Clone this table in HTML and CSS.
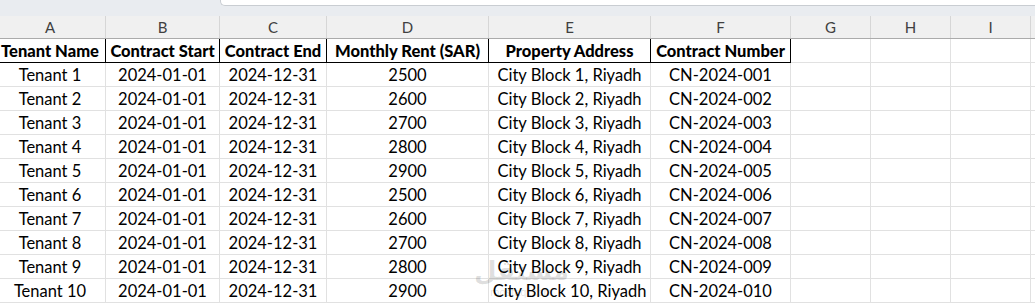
FILE: index.html
```html
<!DOCTYPE html>
<html lang="en">
<head>
<meta charset="utf-8">
<title>Tenant Contracts</title>
<link rel="stylesheet" href="styles.css">
</head>
<body>
<div class="sheet">
  <div class="topband"><div class="formula-box"></div></div>
  <div class="grid colheads">
    <div class="ch">A</div><div class="ch">B</div><div class="ch">C</div><div class="ch">D</div><div class="ch">E</div><div class="ch">F</div><div class="ch">G</div><div class="ch">H</div><div class="ch">I</div><div class="ch"></div>
  </div>
  <div class="grid row head">
    <div class="c hd">Tenant Name</div><div class="c hd">Contract Start</div><div class="c hd">Contract End</div><div class="c hd">Monthly Rent (SAR)</div><div class="c hd">Property Address</div><div class="c hd">Contract Number</div><div class="c"></div><div class="c"></div><div class="c"></div><div class="c"></div>
  </div>
  <div class="grid row"><div class="c">Tenant 1</div><div class="c">2024-01-01</div><div class="c">2024-12-31</div><div class="c">2500</div><div class="c">City Block 1, Riyadh</div><div class="c">CN-2024-001</div><div class="c"></div><div class="c"></div><div class="c"></div><div class="c"></div></div>
  <div class="grid row"><div class="c">Tenant 2</div><div class="c">2024-01-01</div><div class="c">2024-12-31</div><div class="c">2600</div><div class="c">City Block 2, Riyadh</div><div class="c">CN-2024-002</div><div class="c"></div><div class="c"></div><div class="c"></div><div class="c"></div></div>
  <div class="grid row"><div class="c">Tenant 3</div><div class="c">2024-01-01</div><div class="c">2024-12-31</div><div class="c">2700</div><div class="c">City Block 3, Riyadh</div><div class="c">CN-2024-003</div><div class="c"></div><div class="c"></div><div class="c"></div><div class="c"></div></div>
  <div class="grid row"><div class="c">Tenant 4</div><div class="c">2024-01-01</div><div class="c">2024-12-31</div><div class="c">2800</div><div class="c">City Block 4, Riyadh</div><div class="c">CN-2024-004</div><div class="c"></div><div class="c"></div><div class="c"></div><div class="c"></div></div>
  <div class="grid row"><div class="c">Tenant 5</div><div class="c">2024-01-01</div><div class="c">2024-12-31</div><div class="c">2900</div><div class="c">City Block 5, Riyadh</div><div class="c">CN-2024-005</div><div class="c"></div><div class="c"></div><div class="c"></div><div class="c"></div></div>
  <div class="grid row"><div class="c">Tenant 6</div><div class="c">2024-01-01</div><div class="c">2024-12-31</div><div class="c">2500</div><div class="c">City Block 6, Riyadh</div><div class="c">CN-2024-006</div><div class="c"></div><div class="c"></div><div class="c"></div><div class="c"></div></div>
  <div class="grid row"><div class="c">Tenant 7</div><div class="c">2024-01-01</div><div class="c">2024-12-31</div><div class="c">2600</div><div class="c">City Block 7, Riyadh</div><div class="c">CN-2024-007</div><div class="c"></div><div class="c"></div><div class="c"></div><div class="c"></div></div>
  <div class="grid row"><div class="c">Tenant 8</div><div class="c">2024-01-01</div><div class="c">2024-12-31</div><div class="c">2700</div><div class="c">City Block 8, Riyadh</div><div class="c">CN-2024-008</div><div class="c"></div><div class="c"></div><div class="c"></div><div class="c"></div></div>
  <div class="grid row"><div class="c">Tenant 9</div><div class="c">2024-01-01</div><div class="c">2024-12-31</div><div class="c">2800</div><div class="c">City Block 9, Riyadh</div><div class="c">CN-2024-009</div><div class="c"></div><div class="c"></div><div class="c"></div><div class="c"></div></div>
  <div class="grid row"><div class="c">Tenant 10</div><div class="c">2024-01-01</div><div class="c">2024-12-31</div><div class="c">2900</div><div class="c">City Block 10, Riyadh</div><div class="c">CN-2024-010</div><div class="c"></div><div class="c"></div><div class="c"></div><div class="c"></div></div>
  <div class="watermark"><span class="wm-ar">مستقل</span><span class="wm-en">mostaql.com</span></div>
</div>
</body>
</html>
```
FILE: styles.css
```css
html, body {
  margin: 0;
  padding: 0;
  background: #ffffff;
  overflow: hidden;
}
.sheet {
  position: relative;
  width: 1035px;
  height: 305px;
  overflow: hidden;
  font-family: Lato, "Open Sans", sans-serif;
}
.topband {
  height: 16px;
  background: #e9ecf0;
}
.formula-box {
  margin-left: 220px;
  height: 5px;
  background: #ffffff;
  border: 1px solid #c9cdd2;
  border-top: none;
  border-right: none;
  border-bottom-left-radius: 5px;
}
.grid {
  display: grid;
  grid-template-columns: 111px 114px 107px 162px 162px 140px 80px 80px 80px 80px;
  margin-left: -5px;
}
.colheads {
  height: 23px;
  background: #f0f0f0;
  border-bottom: 1px solid #ababab;
  box-sizing: border-box;
}
.ch {
  box-sizing: border-box;
  border-right: 1px solid #d6d6d6;
  text-align: center;
  font-size: 15px;
  line-height: 22px;
  color: #404040;
}
.row {
  height: 24px;
}
.c {
  box-sizing: border-box;
  border-right: 1px solid #e1e1e1;
  border-bottom: 1px solid #e1e1e1;
  text-align: center;
  font-size: 16.5px;
  line-height: 24px;
  color: #000;
  white-space: nowrap;
  overflow: hidden;
}
.c.hd {
  font-weight: 900;
  border-right-color: #000;
  border-bottom-color: #000;
}
.watermark {
  position: absolute;
  left: 474px;
  top: 256px;
  display: flex;
  flex-direction: column;
  align-items: center;
  color: rgba(0, 0, 0, 0.13);
  pointer-events: none;
}
.wm-ar {
  font-family: "DejaVu Sans", sans-serif;
  font-weight: bold;
  font-size: 26px;
  line-height: 30px;
}
.wm-en {
  font-family: "Liberation Sans", sans-serif;
  font-size: 11px;
  line-height: 12px;
}
```
